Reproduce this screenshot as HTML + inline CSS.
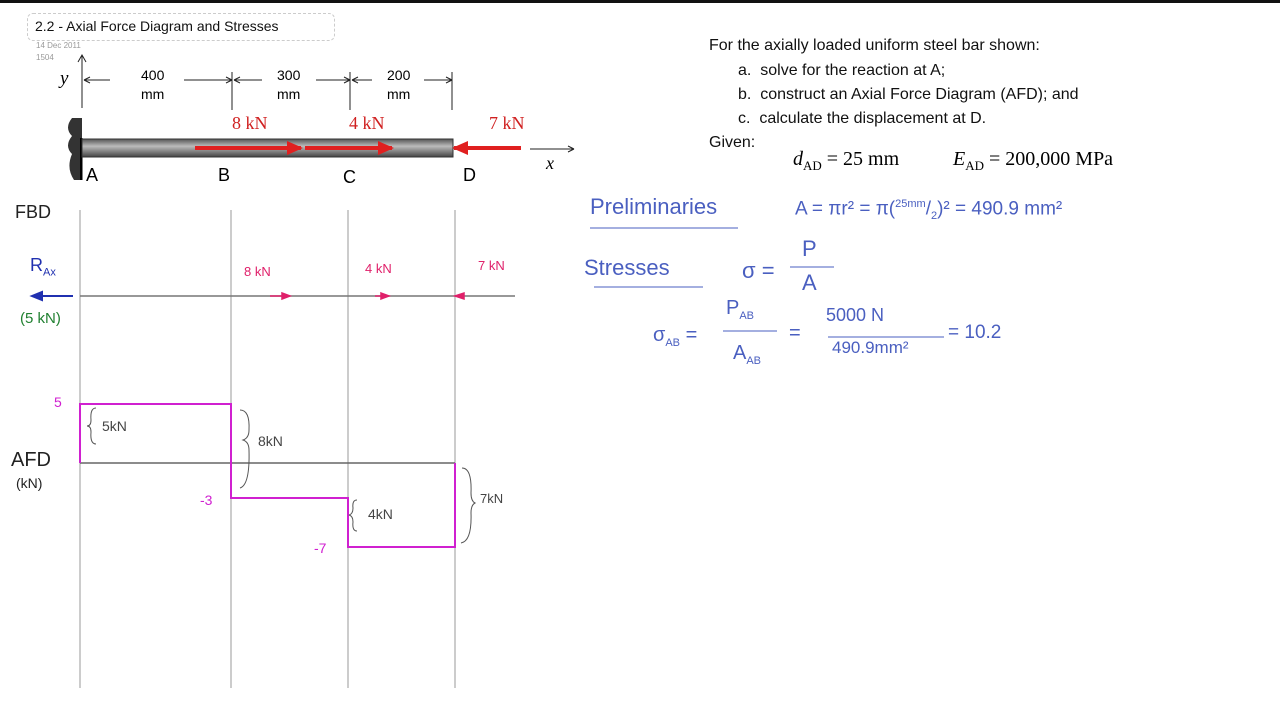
<!DOCTYPE html>
<html><head><style>
html,body{margin:0;padding:0;background:#fff;}
body{width:1280px;height:720px;overflow:hidden;position:relative;font-family:"Liberation Sans",sans-serif;}
.a{position:absolute;white-space:nowrap;}
</style></head><body>
<div class="a" style="left:0;top:0;width:1280px;height:3px;background:#111"></div>
<div class="a" style="left:27px;top:13px;width:306px;height:26px;border:1px dashed #ccc;border-radius:6px"></div>
<div class="a" style="left:35px;top:18px;font-size:14px;color:#111">2.2 - Axial Force Diagram and Stresses</div>
<div class="a" style="left:36px;top:41px;font-size:8px;color:#999">14 Dec 2011</div>
<div class="a" style="left:36px;top:53px;font-size:8px;color:#999">1504</div>

<svg class="a" style="left:0;top:0" width="1280" height="720">
<defs><linearGradient id="g" x1="0" y1="0" x2="0" y2="1"><stop offset="0" stop-color="#555"/><stop offset=".4" stop-color="#bbb"/><stop offset="1" stop-color="#444"/></linearGradient>
<marker id="ra" markerUnits="userSpaceOnUse" markerWidth="16" markerHeight="14" refX="14" refY="7" orient="auto"><path d="M0,0L16,7L0,14z" fill="#e02020"/></marker></defs>
<g stroke="#222" fill="none" stroke-width="1">
<path d="M82,108V56M78,62L82,55L86,62"/>
<path d="M84,80H110M84,80l6,-3M84,80l6,3"/>
<path d="M184,80H232M232,80l-6,-3M232,80l-6,3M232,72V110"/>
<path d="M234,80H262M234,80l6,-3M234,80l6,3"/>
<path d="M316,80H350M350,80l-6,-3M350,80l-6,3M350,72V110"/>
<path d="M352,80H372M352,80l6,-3M352,80l6,3"/>
<path d="M424,80H452M452,80l-6,-3M452,80l-6,3M452,72V110"/>
<path d="M530,149H574M574,149l-6,-3M574,149l-6,3"/>
</g>
<path d="M72,118q-8,10 0,18q-8,10 0,18q-6,14 2,26h8V118z" fill="#333"/>
<rect x="80" y="138" width="2.5" height="42" fill="#000"/>
<rect x="82" y="139" width="371" height="18" fill="url(#g)" stroke="#333"/>
<path d="M195,148H301" stroke="#e02020" stroke-width="4" marker-end="url(#ra)"/>
<path d="M305,148H392" stroke="#e02020" stroke-width="4" marker-end="url(#ra)"/>
<path d="M521,148H454" stroke="#e02020" stroke-width="4" marker-end="url(#ra)"/>
<g stroke="#bbb" stroke-width="1.5">
<path d="M80,210V688M231,210V688M348,210V688M455,210V688"/>
</g>
<path d="M80,296H515" stroke="#777" stroke-width="1.5"/>
<path d="M73,296H32M32,296l10,-4v8z" stroke="#2030b0" stroke-width="2" fill="#2030b0"/>
<g stroke="#e0206a" stroke-width="1.5" fill="#e0206a">
<path d="M270,296h20M290,296l-8,-3v6z"/><path d="M375,296h14M389,296l-8,-3v6z"/><path d="M455,296l9,-3v6z"/>
</g>
<path d="M80,463H455" stroke="#666" stroke-width="1.5"/>
<path d="M80,463V404H231V498H348V547H455V463" stroke="#d020d0" stroke-width="2" fill="none"/>
<g stroke="#555" fill="none" stroke-width="1">
<path d="M96,408q-6,0 -5,12q0,6 -4,6q4,0 4,6q-1,12 5,12"/>
<path d="M240,410q10,0 9,20q0,8 -6,10q6,2 6,10q1,35 -9,38"/>
<path d="M357,500q-5,0 -4,8q0,6 -4,7q4,1 4,7q-1,9 4,9"/>
<path d="M462,468q10,0 9,25q0,8 4,10q-4,2 -4,10q1,28 -10,30"/>
</g>
<g stroke="#4a5fc0" fill="none" stroke-width="1">
<path d="M590,228H738M594,287H703M790,267H834M723,331H777M828,337H944"/>
</g>
</svg>

<div class="a" style="left:60px;top:68px;font:italic 19px 'Liberation Serif',serif">y</div>
<div class="a" style="left:141px;top:66px;font-size:14px;text-align:center;line-height:19px">400<br>mm</div>
<div class="a" style="left:277px;top:66px;font-size:14px;text-align:center;line-height:19px">300<br>mm</div>
<div class="a" style="left:387px;top:66px;font-size:14px;text-align:center;line-height:19px">200<br>mm</div>
<div class="a" style="left:232px;top:113px;font:18px 'Liberation Serif',serif;color:#d02020">8 kN</div>
<div class="a" style="left:349px;top:113px;font:18px 'Liberation Serif',serif;color:#d02020">4 kN</div>
<div class="a" style="left:489px;top:113px;font:18px 'Liberation Serif',serif;color:#d02020">7 kN</div>
<div class="a" style="left:546px;top:153px;font:italic 18px 'Liberation Serif',serif">x</div>
<div class="a" style="left:86px;top:165px;font-size:18px">A</div>
<div class="a" style="left:218px;top:165px;font-size:18px">B</div>
<div class="a" style="left:343px;top:167px;font-size:18px">C</div>
<div class="a" style="left:463px;top:165px;font-size:18px">D</div>

<div class="a" style="left:709px;top:37px;font-size:16px;color:#111">For the axially loaded uniform steel bar shown:</div>
<div class="a" style="left:738px;top:62px;font-size:16px;color:#111">a.&nbsp; solve for the reaction at A;</div>
<div class="a" style="left:738px;top:86px;font-size:16px;color:#111">b.&nbsp; construct an Axial Force Diagram (AFD); and</div>
<div class="a" style="left:738px;top:110px;font-size:16px;color:#111">c.&nbsp; calculate the displacement at D.</div>
<div class="a" style="left:709px;top:134px;font-size:16px;color:#111">Given:</div>
<div class="a" style="left:793px;top:148px;font:20px 'Liberation Serif',serif"><i>d</i><sub style="font-size:13px">AD</sub> = 25 mm</div>
<div class="a" style="left:953px;top:148px;font:20px 'Liberation Serif',serif"><i>E</i><sub style="font-size:13px">AD</sub> = 200,000 MPa</div>

<div class="a" style="left:15px;top:202px;font-size:18px;color:#222">FBD</div>
<div class="a" style="left:30px;top:255px;font-size:18px;color:#2030b0">R<sub style="font-size:11px">Ax</sub></div>
<div class="a" style="left:20px;top:310px;font-size:15px;color:#208030">(5 kN)</div>
<div class="a" style="left:244px;top:264px;font-size:13px;color:#e0206a">8 kN</div>
<div class="a" style="left:365px;top:261px;font-size:13px;color:#e0206a">4 kN</div>
<div class="a" style="left:478px;top:258px;font-size:13px;color:#e0206a">7 kN</div>
<div class="a" style="left:54px;top:394px;font-size:14px;color:#d020d0">5</div>
<div class="a" style="left:11px;top:449px;font-size:20px;color:#222">AFD</div>
<div class="a" style="left:16px;top:475px;font-size:14px;color:#222">(kN)</div>
<div class="a" style="left:102px;top:418px;font-size:14px;color:#444">5kN</div>
<div class="a" style="left:258px;top:433px;font-size:14px;color:#444">8kN</div>
<div class="a" style="left:200px;top:492px;font-size:14px;color:#d020d0">-3</div>
<div class="a" style="left:368px;top:506px;font-size:14px;color:#444">4kN</div>
<div class="a" style="left:480px;top:491px;font-size:13px;color:#444">7kN</div>
<div class="a" style="left:314px;top:540px;font-size:14px;color:#d020d0">-7</div>

<div class="a" style="left:590px;top:194px;font-size:22px;color:#4a5fc0">Preliminaries</div>
<div class="a" style="left:795px;top:198px;font-size:19px;color:#4a5fc0">A = πr² = π(<sup style="font-size:11px">25mm</sup>/<sub style="font-size:11px">2</sub>)² = 490.9 mm²</div>
<div class="a" style="left:584px;top:255px;font-size:22px;color:#4a5fc0">Stresses</div>
<div class="a" style="left:742px;top:258px;font-size:22px;color:#4a5fc0">σ =</div>
<div class="a" style="left:802px;top:236px;font-size:22px;color:#4a5fc0">P</div>
<div class="a" style="left:802px;top:270px;font-size:22px;color:#4a5fc0">A</div>
<div class="a" style="left:653px;top:324px;font-size:20px;color:#4a5fc0">σ<sub style="font-size:11px">AB</sub> =</div>
<div class="a" style="left:726px;top:297px;font-size:20px;color:#4a5fc0">P<sub style="font-size:11px">AB</sub></div>
<div class="a" style="left:733px;top:342px;font-size:20px;color:#4a5fc0">A<sub style="font-size:11px">AB</sub></div>
<div class="a" style="left:789px;top:322px;font-size:20px;color:#4a5fc0">=</div>
<div class="a" style="left:826px;top:305px;font-size:18px;color:#4a5fc0">5000 N</div>
<div class="a" style="left:832px;top:338px;font-size:17px;color:#4a5fc0">490.9mm²</div>
<div class="a" style="left:948px;top:322px;font-size:19px;color:#4a5fc0">= 10.2</div>
</body></html>
